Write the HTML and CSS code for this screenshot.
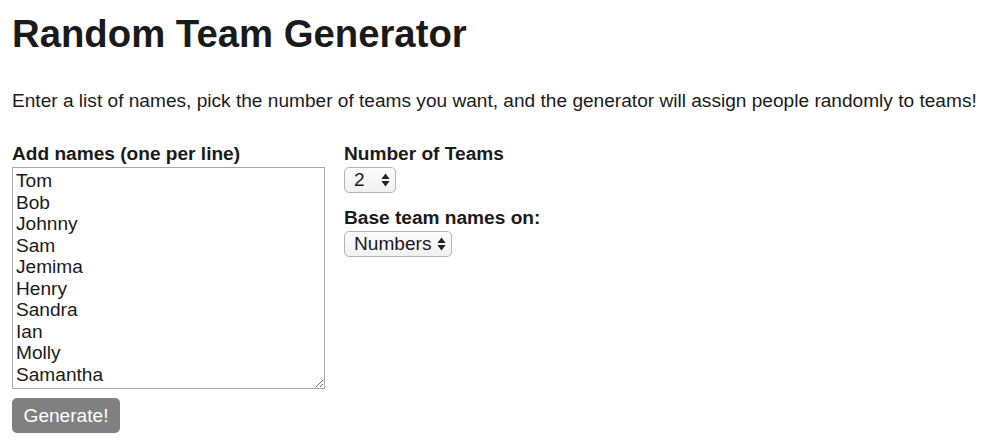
FILE: index.html
```html
<!DOCTYPE html>
<html>
<head>
<meta charset="utf-8">
<link rel="stylesheet" href="styles.css">
</head>
<body>
<h1 class="title">Random Team Generator</h1>
<p class="intro">Enter a list of names, pick the number of teams you want, and the generator will assign people randomly to teams!</p>
<div class="form">
  <div class="col-names">
    <label class="label" for="names">Add names (one per line)</label>
    <textarea id="names" class="names">Tom
Bob
Johnny
Sam
Jemima
Henry
Sandra
Ian
Molly
Samantha</textarea>
    <button class="generate">Generate!</button>
  </div>
  <div class="col-options">
    <label class="label">Number of Teams</label>
    <div class="select select-num"><span>2</span><svg class="arrows" width="9" height="14" viewBox="0 0 9 14"><path d="M4.5 0.5 L8.6 6 L0.4 6 Z M4.5 13.5 L8.6 8 L0.4 8 Z" fill="#222"/></svg></div>
    <label class="label label-base">Base team names on:</label>
    <div class="select select-base"><span>Numbers</span><svg class="arrows" width="9" height="14" viewBox="0 0 9 14"><path d="M4.5 0.5 L8.6 6 L0.4 6 Z M4.5 13.5 L8.6 8 L0.4 8 Z" fill="#222"/></svg></div>
  </div>
</div>
</body>
</html>
```
FILE: styles.css
```css
html, body {
  margin: 0;
  padding: 0;
  background: #fff;
}
body {
  padding: 0 12px;
  font-family: "Liberation Sans", Arial, sans-serif;
  color: #1a1a1a;
  font-size: 19.1px;
}
.title {
  font-size: 38.3px;
  font-weight: bold;
  margin: 12px 0 0;
  line-height: 44px;
}
.intro {
  margin: 34px 0 0;
  line-height: 22px;
}
.form {
  display: flex;
  gap: 19px;
  margin-top: 31px;
}
.col-names, .col-options {
  display: flex;
  flex-direction: column;
  align-items: flex-start;
}
.label {
  font-weight: bold;
  line-height: 22px;
  display: block;
}
.names {
  box-sizing: border-box;
  width: 313px;
  height: 222px;
  border: 1px solid #a9a9a9;
  font-family: "Liberation Sans", Arial, sans-serif;
  font-size: 19.1px;
  line-height: 21.5px;
  color: #1a1a1a;
  padding: 2px 3px;
  margin: 2px 0 0;
  resize: both;
  overflow: hidden;
}
.generate {
  margin-top: 9px;
  background: #808080;
  color: #fff;
  border: none;
  border-radius: 5px;
  font-family: "Liberation Sans", Arial, sans-serif;
  font-size: 19.1px;
  padding: 0 11px;
  width: 108px;
  height: 35px;
  line-height: 35px;
}
.select {
  box-sizing: border-box;
  display: flex;
  align-items: center;
  justify-content: space-between;
  height: 26px;
  border: 1px solid #b4b4b4;
  border-radius: 5px;
  background: linear-gradient(#fdfdfd, #f1f1f1);
  padding: 0 5px 0 9px;
  margin-top: 2px;
  font-size: 19.1px;
  line-height: 24px;
}
.select-num {
  width: 52px;
}
.select-base {
  width: 108px;
}
.label-base {
  margin-top: 14px;
}
```
